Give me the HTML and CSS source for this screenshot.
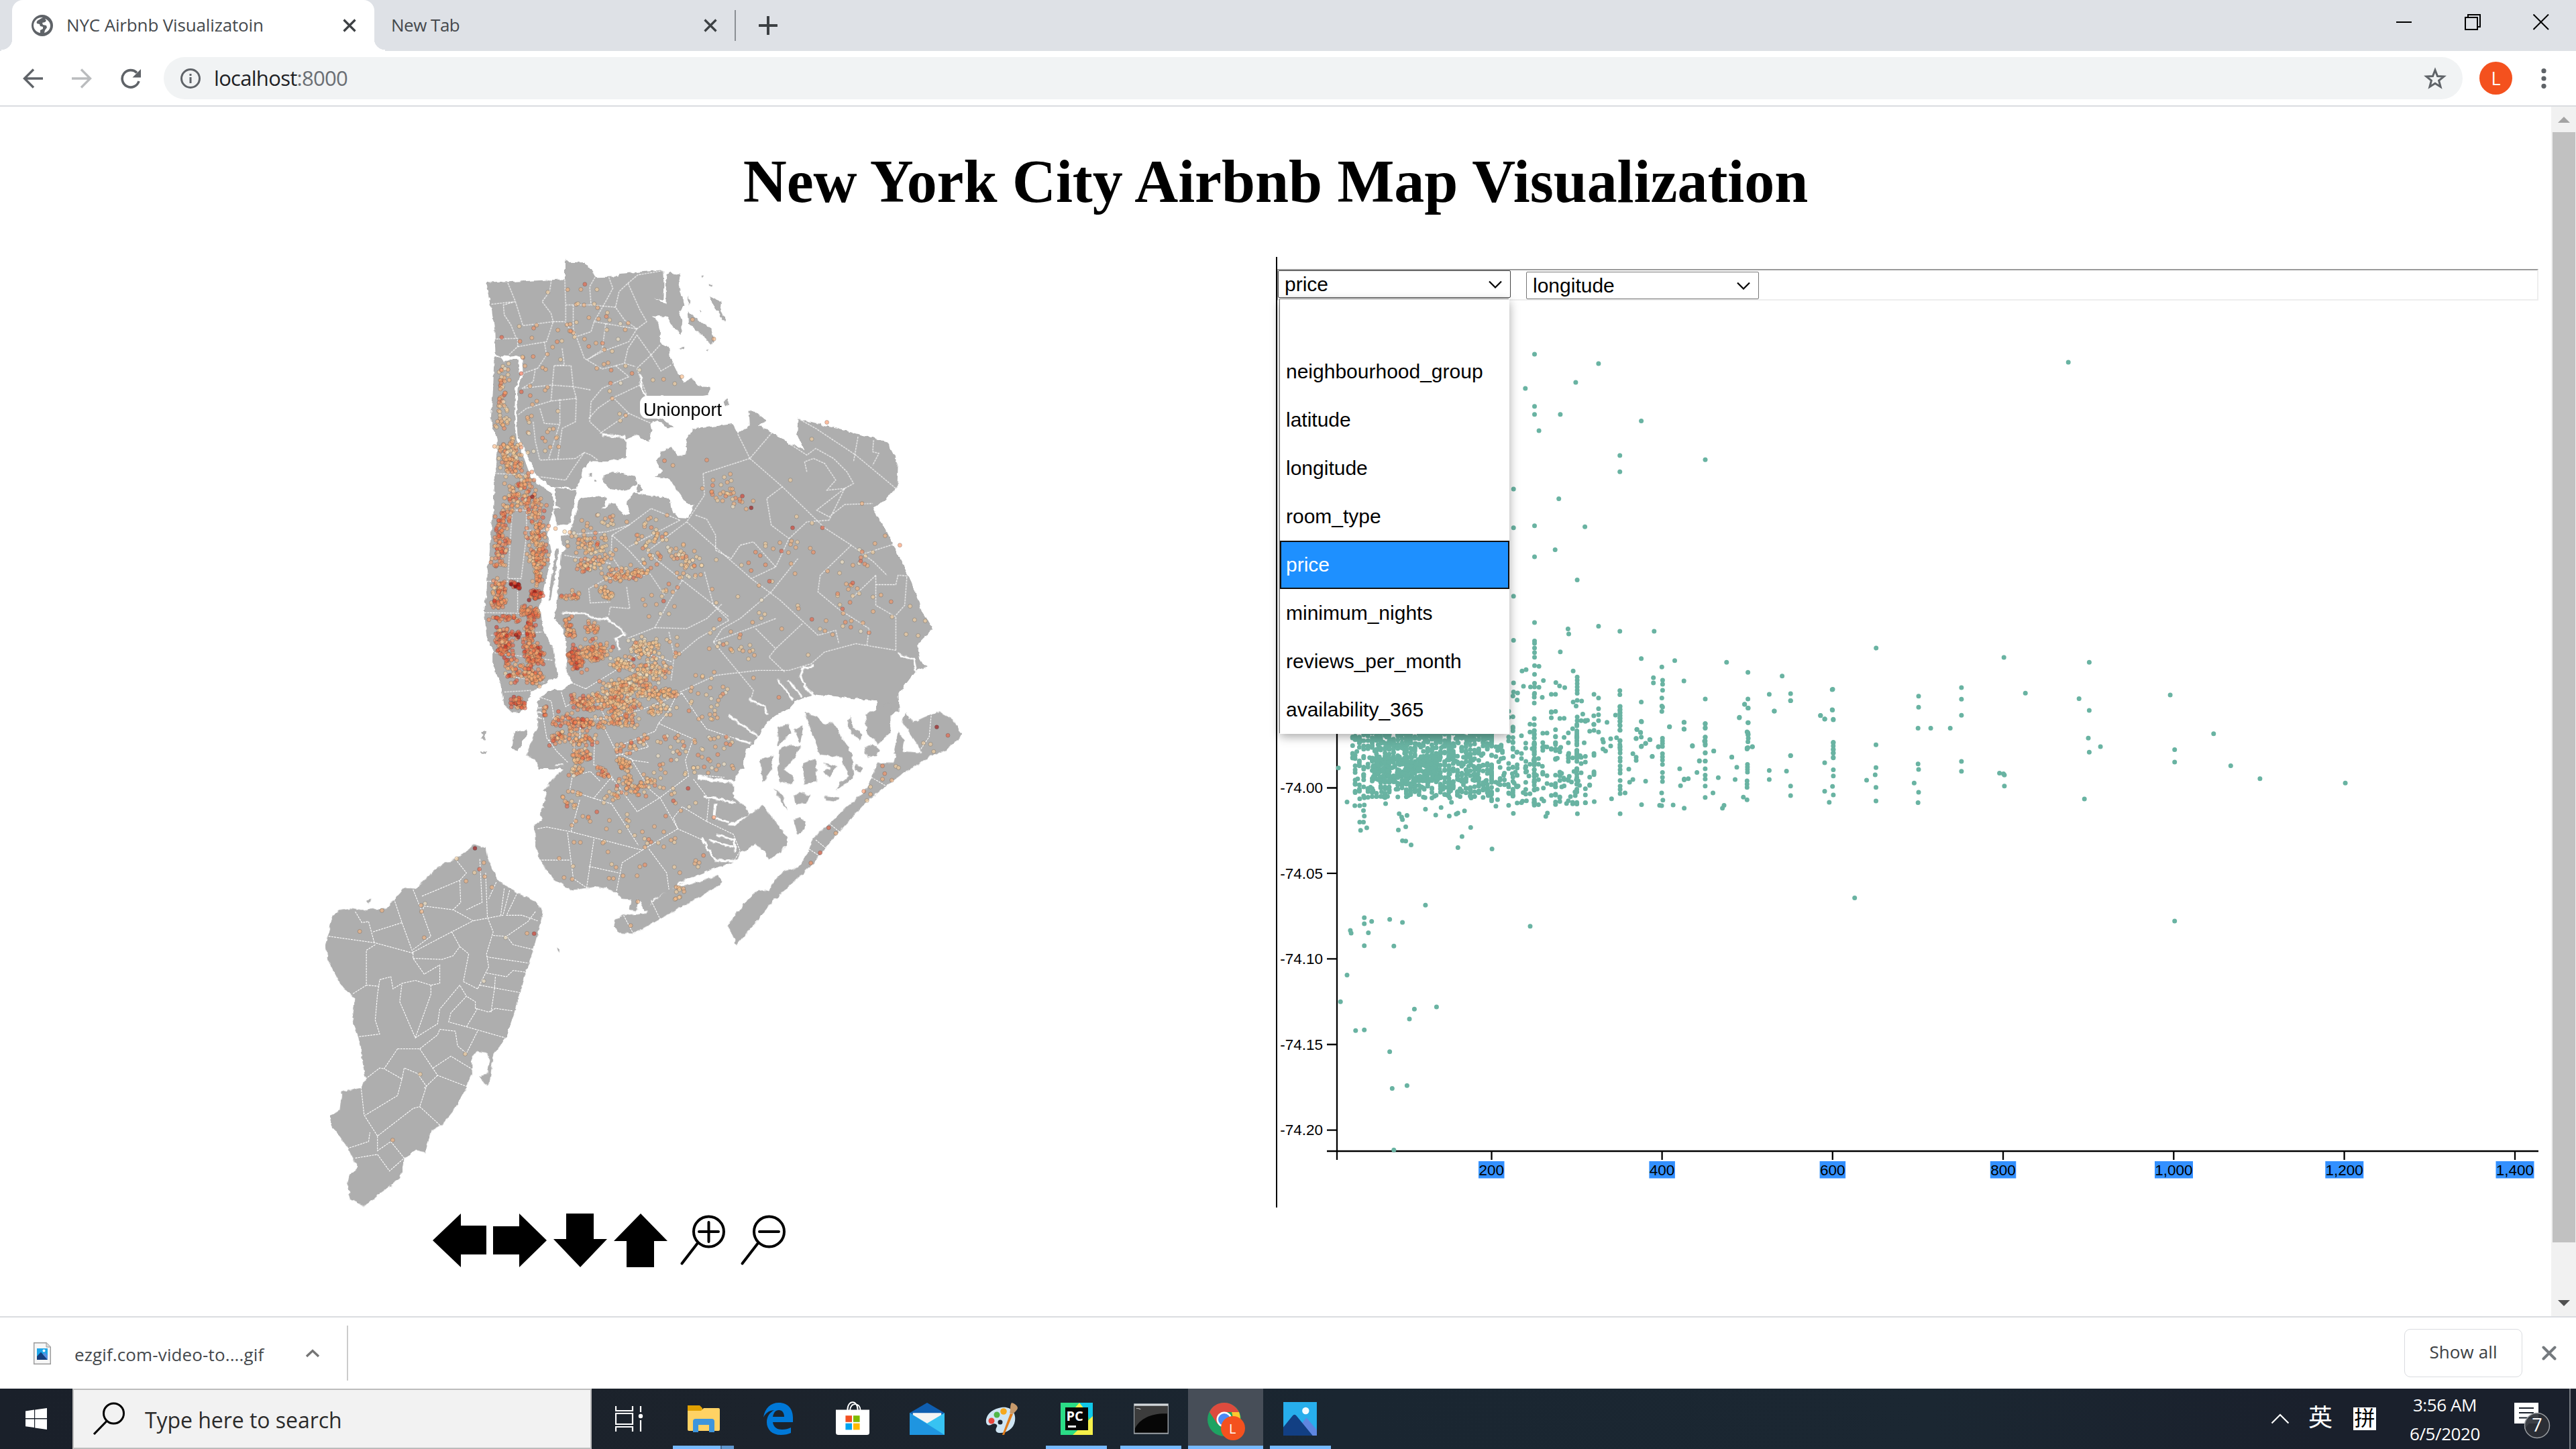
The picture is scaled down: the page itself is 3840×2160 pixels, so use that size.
FILE: index.html
```html
<!DOCTYPE html>
<html lang="en">
<head>
<meta charset="utf-8">
<title>NYC Airbnb Visualizatoin</title>
<link rel="stylesheet" href="styles.css">
</head>
<body>
<div class="screen">
  <header class="tabstrip">
    <div class="tab tab-active">
      <svg class="favicon" viewBox="0 0 32 32"><circle cx="16" cy="16" r="16" fill="#5f6368"/><path d="M17 4c-3 1-4 3-7 4-2 1-3 3-2 5l4 1 1 3 4 1v3l-4 2v4c-6-1-10-6-10-11C3 9 9 3 17 4zM20 6l2 3-2 2-4 1 1 3 5 1 1 3-3 4-1 4c6-2 9-6 9-11 0-4-3-8-8-10z" fill="#fff"/></svg>
      <span class="tab-title t-first">NYC Airbnb Visualizatoin</span>
      <svg class="tab-close" viewBox="0 0 20 20"><path d="M1.500 1.500l17 17M18.500 1.500l-17 17" stroke="#3c4043" stroke-width="3.200"/></svg>
    </div>
    <div class="tab">
      <span class="tab-title t-second">New Tab</span>
      <svg class="tab-close" viewBox="0 0 20 20"><path d="M1.500 1.500l17 17M18.500 1.500l-17 17" stroke="#3c4043" stroke-width="3.200"/></svg>
    </div>
    <i class="tab-sep"></i>
    <svg class="new-tab" viewBox="0 0 28 28"><path d="M14 1v26M1 14h26" stroke="#3c4043" stroke-width="4" stroke-linecap="round"/></svg>
    <div class="window-buttons">
      <svg viewBox="0 0 24 24"><path d="M0 12h23" stroke="#000" stroke-width="2"/></svg>
      <svg viewBox="0 0 24 24"><path d="M1 5h18v18H1zM5 5V1h18v18h-4" fill="none" stroke="#000" stroke-width="2"/></svg>
      <svg viewBox="0 0 24 24"><path d="M.5 .5l22.500 22.500M23 .5L.5 23" stroke="#000" stroke-width="2"/></svg>
    </div>
  </header>
  <nav class="toolbar">
    <svg class="tool" viewBox="0 0 30 30"><path d="M30 15H3M16 1.500L2.500 15L16 28.500" fill="none" stroke="#5f6368" stroke-width="3.400"/></svg>
    <svg class="tool" viewBox="0 0 30 30"><path d="M0 15h27M14 1.500L27.500 15L14 28.500" fill="none" stroke="#babcbe" stroke-width="3.400"/></svg>
    <svg class="tool" viewBox="0 0 30 30"><path d="M27 19A12.700 12.700 0 1 1 24 6.500" fill="none" stroke="#5f6368" stroke-width="3.600"/><path d="M30 1v12.500H17.500z" fill="#5f6368"/></svg>
    <div class="omnibox">
      <svg class="info" viewBox="0 0 30 30"><circle cx="15" cy="15" r="13.500" fill="none" stroke="#5f6368" stroke-width="3"/><path d="M15 13v9M15 8v3" stroke="#5f6368" stroke-width="3"/></svg>
      <span class="url">localhost<span class="port">:8000</span></span>
      <svg class="star" viewBox="0 0 34 34"><path d="M17 4.500l3.500 9 9.500.6-7.400 6 2.500 9.400L17 24.300l-8.100 5.200 2.500-9.400-7.400-6 9.500-.6z" fill="none" stroke="#5f6368" stroke-width="3"/></svg>
    </div>
    <span class="avatar">L</span>
    <svg class="menu" viewBox="0 0 8 30"><circle cx="4" cy="3.700" r="3.600"/><circle cx="4" cy="15" r="3.600"/><circle cx="4" cy="26.300" r="3.600"/></svg>
  </nav>

  <div class="viewport">
    <main class="page">
      <h1>New York City Airbnb Map Visualization</h1>
      <div class="columns">
        <section class="map-col">
          <svg class="map" viewBox="440 383 1040 1417">
            <defs><filter id="rough" x="0" y="0" width="1" height="1"><feTurbulence type="fractalNoise" baseFrequency="0.12" numOctaves="2" seed="4"/><feDisplacementMap in="SourceGraphic" scale="6" xChannelSelector="R" yChannelSelector="G"/></filter></defs>
            <g filter="url(#rough)">
            <g class="land" transform="translate(440 360) scale(.66327 .49745)">
              <path d="M430 124L606 113 606 60 608 50 612 62 650 63 665 85 674 107 728 105 728 97 828 85 830 130 828 175 808 170 825 180 833 190 834 100 845 90 852 100 865 97 862 130 870 170 875 190 863 215 870 240 868 278 845 250 835 225 803 222 815 240 820 270 820 300 840 320 843 350 858 390 875 425 890 408 905 432 933 438 928 460 905 465 790 465 785 520 815 530 830 535 850 558 838 560 815 535 798 545 802 570 795 600 775 590 768 580 745 592 743 650 715 655 700 660 665 658 648 680 640 715 632 742 600 735 578 738 560 720 542 700 530 660 515 620 502 590 498 520 500 440 512 400 510 350 500 342 455 342 450 335 448 260 440 190z"/>
              <path d="M447 348L460 345 470 360 485 352 500 352 505 400 495 440 493 520 498 595 512 640 528 700 545 725 578 755 582 790 575 830 565 860 570 900 575 930 570 980 560 1030 550 1090 555 1140 560 1170 578 1210 585 1260 590 1302 560 1325 530 1350 520 1385 505 1412 488 1412 470 1390 462 1330 445 1270 445 1220 430 1180 425 1110 430 1060 432 1000 437 930 445 800 450 680 455 600 440 530 445 440z"/>
              <path d="M585 738L632 745 618 845 585 852 582 800 597 797 585 790zM586 920h8L574 1075h-4zM693 700L715 692 765 705 768 728 740 747 705 742 692 720zM768 755l2-28h8v20zM660 695h7v8h-7zM672 712h5v7h-5z"/>
              <path d="M597 880L618 875 640 770 680 763 702 768 688 805 705 785 720 785 738 822 752 815 745 780 760 755 842 770 845 800 860 826 885 828 895 790 880 785 855 740 840 710 808 705 825 690 812 660 822 632 845 615 862 645 878 640 880 590 895 562 983 547 995 577 1022 550 1020 510 1030 506 1060 540 1040 550 1072 572 1110 605 1145 625 1128 580 1130 530 1330 600 1355 665 1353 740 1298 803 1330 870 1385 1020 1410 1110 1434 1160 1398 1210 1405 1260 1420 1275 1402 1282 1393 1290 1356 1355 1358 1405 1350 1410 1325 1440 1305 1430 1308 1378 1165 1355 1125 1378 1110 1400 1080 1420 1060 1440 1045 1475 1028 1508 1010 1525 1008 1580 545 1580 545 1375 570 1345 600 1345 625 1320 610 1290 610 1200 597 1150 583 1130 590 1050 597 935 610 920 598 905z"/>
              <path d="M933 165L958 180 955 205 968 237 960 235 940 190zM883 210L905 235 935 260 942 295 935 308 905 270 885 245zM862 320L875 317 872 325zM925 325l6-2-4 6zM911 104h6l-3 6zM930 128h6v5h-6zM884 165l5 15-6 10zM910 205l3 5-4 4zM963 480l7-6 4 14-8 6zM493 1470L520 1462 520 1480 500 1525 487 1520zM418 1470l12-3-4 24-8-3 5-9zM418 1526l12 2-2 8-10-4z"/>
            </g>
            <g class="land" transform="translate(440 1060) scale(.66327 .54847)">
              <path d="M545 -20L1065 -20 1030 90 1015 95 1005 150 985 190 905 174 905 187 985 197 985 235 1015 262 1020 282 970 308 990 310 1050 255 1105 340 1105 365 1068 402 1035 360 1005 385 985 410 950 425 890 455 845 485 800 515 795 540 785 542 770 510 768 542 750 540 755 512 735 510 720 490 680 477 620 487 580 455 550 405 540 365 538 310 555 295 550 280 565 220 558 215 590 170 603 155 555 150 520 118 530 85 545 40z"/>
              <path d="M716 580L720 565 738 555 790 548 800 520 830 495 840 485 890 470 950 447 960 465 930 490 820 565 760 605 725 602z"/>
              <path d="M973 585L1000 535 1035 490 1065 485 1090 440 1130 425 1150 390 1165 345 1200 305 1240 260 1280 220 1295 180 1310 140 1345 140 1352 110 1408 115 1400 95 1365 30 1370 5 1390 30 1443 0 1480 25 1498 65 1465 105 1430 122 1365 170 1285 245 1210 345 1160 420 1075 515 992 635z"/>
              <path d="M1282 10L1338 -25 1338 60 1310 90 1285 60zM1085 45L1110 36 1115 60 1085 95zM1120 50L1142 40 1135 90zM1145 5l27 10 15 20 20-5 25 45 20 45 3 60-40 36 8-20 22-20-10-20-7-30-48-8zM1045 130L1075 120 1070 160 1050 195zM1085 150L1090 100 1110 92 1137 98 1120 130 1098 160 1120 180 1118 200 1088 190zM1140 140L1170 130 1172 190 1145 200zM1120 230L1135 220 1157 228 1150 250 1125 253zM1190 230L1225 235 1215 248 1195 245zM1120 295L1135 288 1147 300 1145 320 1130 338zM1280 100L1300 90 1313 105 1305 122 1285 125zM1355 55L1370 80 1364 120 1345 115zM1187 140L1217 150 1200 180 1187 165 1203 155zM1240 40l8-28 5 30 20 20-2 20-22-25zM1258 145l18 10-4 14-12-8zM1075 210l20 20 12 40-18-32z"/>
              <path d="M404 363L428 372 432 400 455 460 490 487 545 522 557 548 535 650 515 720 490 830 472 890 445 935 437 1010 430 1016 413 992 432 985 438 950 430 928 412 925 396 940 398 985 385 1020 360 1080 330 1125 305 1140 293 1200 270 1192 245 1218 237 1270 190 1310 155 1348 125 1325 117 1290 122 1260 140 1240 120 1190 80 1125 80 1100 100 1085 105 1035 148 1022 158 1000 142 885 128 840 135 780 105 750 75 680 68 635 85 555 100 540 125 535 150 540 205 535 245 480 270 483 320 425 360 402zM588 643l6 3 2 12-5-4zM161 514l10-2-2 10-5 2z"/>
            </g>
            <g class="channel" transform="translate(440 360) scale(.66327 .49745)">
              <path d="M600 1113L650 1113 675 1132 700 1130 728 1155 742 1180M742 1175L720 1190 730 1225M1355 1235L1390 1252 1396 1290M1165 1271L1140 1280 1135 1300 1145 1335 1165 1360M1085 1312L1120 1375M1108 1315L1140 1365M975 1420L1040 1482M990 1490L1025 1505M1020 1370L1055 1395 1062 1420M690 580L740 585 745 600M775 400L778 440 790 470"/>
            </g>
            <g class="channel" transform="translate(440 1060) scale(.66327 .54847)">
              <path d="M903 182L985 192M918 232L950 238 990 250M945 250L942 290 975 302M915 345L925 370 945 405 1005 408M945 335L985 350 990 385M930 350L985 370M860 470L955 425"/>
              <path class="piers" d="M545 -10h9M545 5h9M545 20h9M562 175h16M560 190h16M556 205h16M552 220h13M550 240h12M548 260h12M580 160h16M585 145h18"/>
            </g>
            </g>
            <g class="border" transform="translate(440 360) scale(.66327 .49745)">
              <path d="M478 124L495 180 440 188M495 180L468 190 470 220 485 250 497 290M495 180L512 252 580 240M576 113L572 150 555 180 575 215 580 240 606 240M606 113L608 190 608 245 630 285M674 107L662 135 665 190M608 190L665 190 720 197M705 107L714 140 700 175 672 240 768 262 790 240 775 205 748 125 728 150 720 197 740 235 768 262M748 125L770 100 828 87M672 240L665 270 632 285M698 245L690 325 655 355M625 190L625 260 650 350 690 382M768 262L750 300 690 330 655 355M768 280L800 340 822 388 845 370M800 340L768 380 790 460M820 310L800 340M690 382L720 372 740 365 748 320 768 280M720 372L750 405M740 365L765 375M775 430L715 468 750 515 800 545M715 468L680 500 660 530M750 515L685 575M750 405L690 440 665 480 662 540 690 575 740 590M452 292L500 290 500 315 480 340M500 315L565 300 580 240M540 380L535 420 510 440 575 430 625 435 632 470 575 478 520 500 500 520M582 372L578 430 575 478M582 372L620 372 625 435 665 445M595 472L595 545 570 650M632 470L630 540 600 560 590 655M550 500L560 545 595 548M535 540L540 600 550 655 630 650 650 632 665 640 680 655M650 632L625 680 608 715 550 705M560 300L565 340 545 380M600 320L605 370 582 372M512 395L545 380"/>
              <path d="M455 615L510 617M448 695L530 700M490 805L520 805 520 880 508 1010 478 1010 488 805M430 1018L480 1018M425 1112L550 1115M440 1180L555 1170M448 1232L580 1255M470 1300L560 1320M470 1350L530 1345M520 865L565 865M500 1015L500 1110"/>
              <path d="M995 577L1022 650 1072 572M1022 650L917 695M1022 650L1095 735 1190 858 1250 910 1300 960 1330 1000M1110 605L1150 640 1170 620 1210 650 1240 690 1255 725 1235 740 1200 835M1130 530L1170 560 1260 640 1350 740M1265 585L1255 660M1300 595L1298 630 1312 635 1298 670M1150 690L1145 660 1165 650 1190 665 1215 715 1195 745 1235 740 1172 805 1200 825 1235 788 1298 785M1095 735L1060 770 1070 850 1110 890 1080 975M1110 890L1150 840 1200 835M917 695L920 760 880 840M900 820L925 832 945 880 945 925 980 950 1000 910 1030 900 1080 975 1025 1010M880 840L1025 1010 1090 1075 1175 1180 1215 1165 1222 1205M865 835L750 915M750 850L712 880 710 940 730 980M750 850L800 800 865 835M880 840L790 930 870 1015 975 1125M712 880L750 925 800 1000 830 1060M870 1015L840 1080 808 1157 745 1190M808 1157L880 1160 925 1130 960 1085M600 880L700 870 750 850M605 940L710 965M730 980L700 1010 660 1040 663 1083 708 1080M700 1010L795 998M745 1035L752 1100 708 1095 705 1120M840 1170L852 1240 845 1315M865 1350L945 1300 1040 1285 1110 1285 1160 1265 1190 1230 1260 1205 1350 1225M940 1200L1030 1345 1025 1370M1035 1160L1080 1220 1065 1245 1100 1290M1140 1145L1080 1220M1080 1130L940 1200M940 1200L960 1160 1000 1130 1070 1050 1130 950M1250 910L1180 1000 1175 1050 1220 1100 1290 1160 1285 1210M1350 905L1280 935M1305 1000L1305 1090 1350 1125 1350 1225M1305 1000L1250 1070M1305 1028L1350 1028 1355 1000 1375 1002 1370 1090 1350 1120M920 990L940 1090 975 1135 905 1190 860 1240"/>
            </g>
            <g class="border" transform="translate(720 840) scale(.33333)">
              <path d="M460 560L400 535 360 540M460 560L590 480 640 440 700 400 790 420 845 440M350 575L370 640 440 600M890 580L720 650 550 695 390 695 310 690M890 580L970 700 1000 740 1180 800M890 580L860 600 830 660 785 715 770 750 610 815M785 715L940 785 905 880 920 950 790 1048M270 690L285 780 330 840 380 890M290 790L430 790 440 700M500 770L495 900 530 910 575 950 580 975M545 740L595 840 670 880M595 860L740 820 715 780M660 870L745 1010 790 1048 690 1110 575 955 495 1050 388 1015 400 950 480 930 525 975M495 1050L575 1075 695 1260M260 600L305 615 320 700M500 600L550 695M410 800L405 860M740 890L670 880"/>
            </g>
            <g class="border" transform="translate(440 1060) scale(.66327 .54847)">
              <path d="M545 320L565 315 620 328 780 378 735 412 722 490M620 328L640 240M612 330L625 455 655 480 672 345M548 405L618 405M660 422L728 440M780 378L860 320 820 235M895 185L930 240 925 300 870 260 850 290 860 320 915 350M795 375L835 440 840 485M800 515L820 565M738 555L760 605M925 300L985 335 1000 380 985 410M905 174L965 180M1430 5L1425 70 1405 105M1295 180L1330 205M1200 305L1225 330M1170 350L1195 375M1155 375L1180 395"/>
              <path d="M75 612L180 630 265 658M135 545L150 575 165 572 178 630M222 510L240 575 175 600M265 485L285 545 305 612 265 648M240 575L265 658M285 503L370 460M285 545L290 530 355 540 400 570 352 600 265 655M360 402L385 440 370 460 372 520 355 540M415 402L420 520 385 540M428 440L432 560 445 600 430 660 435 695 410 755M452 465L435 510M470 482L462 555M482 487L467 555 400 570M500 492L475 555 510 555 545 570M540 545L523 572 475 612 490 635 535 648M445 610L475 612M352 600L370 640 390 660 378 735 410 755M430 668L525 685M430 712L475 722 490 705 520 710M415 745L505 765M450 722L448 755 440 820M405 808L435 818 450 808 490 815M410 808L385 858 345 845 350 820 385 775 405 790 405 810M385 858L472 888M265 672L330 675 355 665 370 640M265 658L265 672 290 715 325 690 325 740 305 745 270 732 240 740 220 755 215 722 190 730 185 770 180 840 190 878 142 885M180 635L160 650 160 745 190 748M130 768L160 745M305 745L305 770 270 888 235 790 240 740M270 888L320 850 325 810 370 745 385 775M230 918L280 918 320 880 325 865 360 870 365 910 385 930 410 870M230 918L200 972 240 1000 245 970 275 985 295 1020 280 1075 325 1125M280 918L320 990 385 1020M310 970L350 938 400 975M320 990L290 1025M158 1000L190 970 200 972M240 1000L230 1045 158 1098M148 1022L155 1098 185 1155 265 1080 280 1075M122 1187L165 1170 168 1145M185 1155L185 1195 215 1170 245 1215 212 1250 185 1205 135 1215"/>
            </g>
            <g class="listings" id="listings"></g>
            <rect x="954" y="590" width="124" height="34" rx="11" fill="#fff"/>
            <text class="hood" x="959" y="619.500">Unionport</text>
          </svg>
          <div class="controls">
            <svg viewBox="0 0 80 80"><path d="M0 40L42 0v18h38v43H42v19z"/></svg>
            <svg viewBox="0 0 80 80"><path d="M80 40L39 0v19H0v42h39v19z"/></svg>
            <svg viewBox="0 0 80 80"><path d="M19 0h41v38h20L40 80 0 38h19z"/></svg>
            <svg viewBox="0 0 80 80"><path d="M40 0L80 41H60v39H19V41H0z"/></svg>
            <svg viewBox="0 0 80 80"><g class="lens"><circle cx="51.500" cy="27" r="22.500"/><path d="M35 44L11.500 74.500M51.500 13v29M37 27h29"/></g></svg>
            <svg viewBox="0 0 80 80"><g class="lens"><circle cx="51.500" cy="27" r="22.500"/><path d="M35 44L11.500 74.500M37 27h29"/></g></svg>
          </div>
        </section>
        <section class="chart-col">
          <div class="filters">
            <div class="select select-open"><span>price</span><svg viewBox="0 0 20 12"><path d="M1 1.500l9 9 9-9" fill="none" stroke="#000" stroke-width="2.200"/></svg>
              <ul class="options">
                <li></li><li>neighbourhood_group</li><li>latitude</li><li>longitude</li><li>room_type</li><li class="chosen">price</li><li>minimum_nights</li><li>reviews_per_month</li><li>availability_365</li>
              </ul>
            </div>
            <div class="select"><span>longitude</span><svg viewBox="0 0 20 12"><path d="M1 1.500l9 9 9-9" fill="none" stroke="#000" stroke-width="2.200"/></svg></div>
          </div>
          <svg class="chart" viewBox="1904 448 1890 1352">
            <path class="axis" d="M1993 460V1729M1978 1716H3784M1978 1174.500h15M1978 1301.900h15M1978 1429.400h15M1978 1557h15M1978 1684.600h15M2223.500 1716v13M2477.600 1716v13M2731.800 1716v13M2986 1716v13M3240.300 1716v13M3494.600 1716v13M3749 1716v13"/>
            <g class="dots" id="dots"></g>
            <g class="ylabels"><text x="1972" y="1182">-74.00</text><text x="1972" y="1309.500">-74.05</text><text x="1972" y="1437">-74.10</text><text x="1972" y="1564.500">-74.15</text><text x="1972" y="1692">-74.20</text></g>
            <g fill="#3390ff"><path d="M2204 1731h38.500v25.500h-38.500zM2458.400 1731h38.500v25.500h-38.500zM2712.600 1731h38.500v25.500h-38.500zM2966.800 1731h38.500v25.500h-38.500zM3212 1731h57v25.500h-57zM3466.300 1731h57v25.500h-57zM3720.500 1731h57v25.500h-57z"/></g>
            <g class="xlabels"><text x="2223.300" y="1751.500">200</text><text x="2477.600" y="1751.500">400</text><text x="2731.800" y="1751.500">600</text><text x="2986" y="1751.500">800</text><text x="3240.300" y="1751.500">1,000</text><text x="3494.600" y="1751.500">1,200</text><text x="3748.900" y="1751.500">1,400</text></g>
          </svg>
        </section>
      </div>
    </main>
    <aside class="scrollbar">
      <svg viewBox="0 0 37 38"><path d="M10 24l9-9 9 9z" fill="#a3a3a3"/></svg>
      <i class="thumb"></i>
      <svg viewBox="0 0 37 38"><path d="M10 14h18l-9 9z" fill="#505050"/></svg>
    </aside>
  </div>

  <div class="shelf">
    <svg class="file" viewBox="0 0 26 33"><path d="M.7.7H19l6.300 6.300v25.300H.7z" fill="#f7f7f7" stroke="#9a9a9a" stroke-width="1.400"/><path d="M19 .7V7h6.300" fill="#ddd" stroke="#9a9a9a"/><path d="M5 9h16v17H5z" fill="#1fa6e8"/><path d="M5 21l6-6.500L21 26H5z" fill="#173f7c"/><path d="M14 18l3-3 4 5v6z" fill="#5b8fe0"/><circle cx="15.500" cy="12.500" r="2" fill="#fff"/></svg>
    <span class="filename">ezgif.com-video-to....gif</span>
    <svg class="shelf-chev" viewBox="0 0 22 13"><path d="M2 11l9-8.500L20 11" fill="none" stroke="#757575" stroke-width="3.400"/></svg>
    <i class="shelf-sep"></i>
    <span class="show-all">Show all</span>
    <svg class="shelf-close" viewBox="0 0 22 22"><path d="M2.500 2.500l17 17M19.500 2.500l-17 17" stroke="#757a7e" stroke-width="4" stroke-linecap="round"/></svg>
  </div>

  <footer class="taskbar">
    <div class="start"><svg viewBox="0 0 32 32"><path d="M0 4.500L13 2.600V15H0zM14.200 2.400L32 0v15H14.200zM0 16.500h13v12.600L0 27.300zM14.200 16.500H32V32l-17.800-2.500z" fill="#fff"/></svg></div>
    <div class="search"><svg viewBox="0 0 50 50"><circle cx="31.500" cy="17" r="15" fill="none" stroke="#000" stroke-width="3"/><path d="M21 28.500L2 48" stroke="#000" stroke-width="3.200"/></svg><span>Type here to search</span></div>
    <div class="app taskview"><svg viewBox="0 0 42 40"><path d="M1 1v7h25V1M1 12h25v16H1zM1 39v-7h25v7M38 1v9M38 22v17" fill="none" stroke="#fff" stroke-width="2.200"/><circle cx="38" cy="16" r="3.200" fill="#fff"/></svg></div>
    <div class="app run multi"><svg viewBox="0 0 52 52"><path d="M2 6h18l4 4v6H2z" fill="#e0a000"/><path d="M2 14h20l4-4h22q2 0 2 2v30q0 2-2 2H4q-2 0-2-2z" fill="#ffd264"/><path d="M10 46V30q0-4 4-4h24q4 0 4 4v16h-8V35H18v11z" fill="#3e95dc"/></svg></div>
    <div class="app"><svg viewBox="0 0 52 52"><path d="M4 24C6 10 15 2 27 2c14 0 21 10 21 22v7H18c1 8 7 11 14 11 5 0 9-1 13-3v8c-4 2-9 3-15 3C17 50 9 42 9 31c0-8 4-14 11-18C11 14 7 18 4 24zm14-1h17c0-6-3-10-8-10s-8 4-9 10z" fill="#0078d7"/></svg></div>
    <div class="app"><svg viewBox="0 0 52 54"><path d="M18 14C18-3 34-3 34 14M22 14c0-13 16-13 16 0" fill="none" stroke="#fff" stroke-width="2"/><path d="M0 13h52v35q0 4-4 4H4q-4 0-4-4z" fill="#fff"/><path d="M15 22h10v10H15z" fill="#f25022"/><path d="M27 22h10v10H27z" fill="#7fba00"/><path d="M15 34h10v10H15z" fill="#00a4ef"/><path d="M27 34h10v10H27z" fill="#ffb900"/></svg></div>
    <div class="app"><svg viewBox="0 0 54 52"><path d="M0 17L27 1l27 16v17H0z" fill="#0f5eb0"/><path d="M5 17h44v18H5z" fill="#f4f4f4"/><path d="M0 17l27 16 27-16v34H0z" fill="#37c3f2"/><path d="M0 17v34h54z" fill="#1f95e0"/></svg></div>
    <div class="app"><svg viewBox="0 0 52 52"><path d="M26 9c14-2 22 8 20 20-2 13-14 19-24 18-6-1-5-6-3-9s-3-6-7-4c-6 4-10 0-9-7C5 17 14 11 26 9z" fill="#cfe5f3"/><circle cx="24" cy="31" r="3.500" fill="#1b222c"/><circle cx="11" cy="29" r="4.500" fill="#e8463c"/><circle cx="19" cy="20" r="4.500" fill="#51b748"/><circle cx="29" cy="15" r="4.800" fill="#f6a81c"/><path d="M27 50L39 18l4 1-13 31z" fill="#e07c1a"/><path d="M38 17c2-4 0-11 3-15 4 1 9 4 9 8-1 4-5 6-7 9z" fill="#c79a6b"/></svg></div>
    <div class="app run"><svg viewBox="0 0 52 52"><path d="M2 2h48v48H2z" fill="#2bdc86"/><path d="M28 2h22v30z" fill="#10c8e8"/><path d="M30 2l8 10-20 4zM50 22v28H20z" fill="#f5f04a"/><path d="M9 9h34v34H9z" fill="#050505"/><text x="10.500" y="28.500" class="pc">PC</text><path d="M13 36h12v3H13z" fill="#fff"/></svg></div>
    <div class="app run"><svg viewBox="0 0 54 46"><path d="M.5.5h53v45H.5z" fill="#060606" stroke="#9aa0a5" stroke-width="2"/><path d="M2 3h50v12C28 14 10 22 2 38z" fill="#3c3c3c"/><path d="M1 0h52v3H1z" fill="#d5d9dc"/><path d="M4 7h5M8 8h3" stroke="#bbb"/></svg></div>
    <div class="app run current"><svg viewBox="0 0 58 58"><circle cx="27" cy="27" r="25" fill="#1ea362"/><path d="M5 16C9 7 17 2 27 2c10 0 18 6 22 14H27L17 34z" fill="#dd4b3e"/><path d="M49 16c5 13 0 31-20 36l12-24-3-12z" fill="#fdc82f"/><circle cx="27" cy="27" r="11.500" fill="#fff"/><circle cx="27" cy="27" r="9" fill="#4a8af4"/><circle cx="40" cy="40" r="18" fill="#f4511e"/><text x="34" y="48" class="badge-l">L</text></svg></div>
    <div class="app run"><svg viewBox="0 0 50 50"><path d="M1 1h48v48H1z" fill="#27aeec"/><path d="M25 35l9-12 15 18v8H25z" fill="#5f86e0"/><path d="M1 37l13-16q3-4 6 0l23 28H1z" fill="#123f83"/><circle cx="33" cy="13.500" r="5" fill="#f3fbff"/></svg></div>
    <div class="tray">
      <svg class="tray-up" viewBox="0 0 28 16"><path d="M1.500 14.500L14 2l12.500 12.500" fill="none" stroke="#fff" stroke-width="2.200"/></svg>
      <span class="ime">英</span>
      <span class="ime-box">拼</span>
      <div class="clock"><span class="time">3:56 AM</span><span class="date">6/5/2020</span></div>
      <svg class="notes" viewBox="0 0 54 54"><path d="M0 0h36v31H22l-7 8v-8H0z" fill="#fff"/><path d="M7 8h22M7 15h22M7 22.500h22" stroke="#1b222c" stroke-width="2"/><circle cx="34" cy="34" r="18.500" fill="#2c3036" fill-opacity=".92" stroke="#9a9da1" stroke-width="1.500"/><text x="34" y="43" class="count">7</text></svg>
      <i class="desk-edge"></i>
    </div>
  </footer>
</div>
<script src="app.js"></script>
</body>
</html>
```
FILE: styles.css
```css
* { box-sizing: border-box; }
html, body { margin: 0; padding: 0; }
body { background: #fff; font-family: "Open Sans", "Noto Sans", sans-serif; overflow: hidden; }
svg { display: block; flex: none; }
.screen { width: 3840px; height: 2160px; display: flex; flex-direction: column; }

.tabstrip { height: 76px; background: #dee1e6; display: flex; align-items: center; padding-left: 18px; flex: none; }
.tab { position: relative; height: 76px; width: 540px; display: flex; align-items: center; padding: 0 27px 0 25px; font-size: 26px; color: #45494d; }
.tab-active { background: #fff; border-radius: 16px 16px 0 0; padding-left: 29px; }
.tab-active::before, .tab-active::after { content: ""; position: absolute; bottom: 0; width: 16px; height: 18px; }
.tab-active::before { left: -16px; background: radial-gradient(circle at 0 0, transparent 16px, #fff 16.5px); }
.tab-active::after { right: -16px; background: radial-gradient(circle at 100% 0, transparent 16px, #fff 16.5px); }
.favicon { width: 32px; height: 32px; margin-right: 20px; }
.tab-title { flex: 1; white-space: nowrap; line-height: 36px; margin-top: -2px; }
.t-first { letter-spacing: 0; letter-spacing: -.15px; }
.t-second { letter-spacing: -.5px; }
.tab-close { width: 20px; height: 20px; }
.tab:nth-child(2) { width: 537px; padding-right: 26px; }
.tab-sep { width: 2px; height: 46px; background: #8b8f94; }
.new-tab { width: 28px; height: 28px; margin-left: 34px; }
.window-buttons { margin-left: auto; display: flex; gap: 78px; padding-right: 40px; margin-top: -10px; }
.window-buttons svg { width: 24px; height: 24px; }

.toolbar { height: 83px; border-bottom: 2px solid #dadce0; display: flex; align-items: center; padding-left: 34px; flex: none; }
.tool { width: 30px; height: 30px; margin-right: 43px; }
.tool:nth-child(3) { margin-right: 34px; }
.omnibox { width: 3427px; height: 63px; border-radius: 32px; background: #f1f3f4; display: flex; align-items: center; padding: 0 24px 0 25px; }
.info { width: 30px; height: 30px; margin-right: 20px; }
.url { font-size: 31px; line-height: 60px; letter-spacing: -.7px; color: #202124; flex: 1; margin-top: -1px; }
.port { color: #6b6f74; }
.star { width: 34px; height: 34px; }
.avatar { width: 49px; height: 49px; border-radius: 50%; background: #f4511e; color: #fff; font-size: 27px; line-height: 49px; text-align: center; margin-left: 25px; }
.menu { width: 8px; height: 30px; margin-left: 43px; fill: #5f6368; }

.viewport { height: 1803px; display: flex; flex: none; }
.page { width: 3803px; padding-top: 60px; }
h1 { margin: 0 0 60px; text-align: center; font: bold 90px/104px "Liberation Serif", serif; letter-spacing: -.05px; color: #000; }
.columns { display: flex; }
.map-col { width: 1902px; }
.map { width: 1040px; height: 1417px; margin-left: 440px; }
.land path { fill: #aeaeae; }
.channel path { fill: none; stroke: #fff; stroke-width: 3; vector-effect: non-scaling-stroke; }
.channel .piers { stroke-width: 2; }
.border path { fill: none; stroke: #fff; stroke-width: 1.1; stroke-dasharray: 3 1.2; vector-effect: non-scaling-stroke; }
.listings circle { fill-opacity: .58; stroke: #444; stroke-width: .6; stroke-opacity: .5; }
.hood { font: 27px "Liberation Sans", sans-serif; }
.controls { display: flex; gap: 10px; padding: 9px 0 0 645px; }
.controls svg { width: 80px; height: 80px; fill: #000; }
.lens { fill: none; stroke: #000; stroke-width: 4; stroke-linecap: round; }

.chart-col { width: 1890px; height: 1417px; border-left: 2px solid #000; padding-top: 18px; }
.filters { width: 1880px; height: 47px; display: flex; gap: 23px; border: 2px solid #eee; border-top-color: #9a9a9a; border-left: 1px solid #9a9a9a; font: 30px/38px "Liberation Sans", sans-serif; }
.select { position: relative; width: 347px; height: 41px; margin-top: 2px; border: 1px solid #767676; border-radius: 2px; background: #fff; display: flex; align-items: center; justify-content: space-between; padding: 0 12px 0 9px; }
.select-open { margin-top: 0; border-color: #444; }
.select svg { width: 20px; height: 12px; }
.options { position: absolute; left: 2px; top: 42px; width: 342px; margin: 0; padding: 0; list-style: none; background: #fff; box-shadow: 0 4px 14px rgba(0,0,0,.35), -1px -1px 0 #777; z-index: 2; }
.options li { height: 72px; padding-left: 9px; line-height: 72px; }
.options .chosen { background: #1e90ff; color: #fff; border: 2px solid #101010; padding-left: 7px; line-height: 68px; }
.chart { width: 1890px; height: 1352px; }
.axis { fill: none; stroke: #000; stroke-width: 2.3; }
.dots { fill: #69b3a2; }
.ylabels, .xlabels { font: 22.5px "Liberation Sans", sans-serif; }
.ylabels { text-anchor: end; }
.xlabels { text-anchor: middle; }

.scrollbar { width: 37px; background: #f1f1f1; display: flex; flex-direction: column; }
.scrollbar svg { width: 37px; height: 38px; }
.thumb { width: 34px; height: 1655px; margin-left: 2px; background: #c1c1c1; }
.scrollbar svg:last-child { margin-top: auto; margin-bottom: 0; }

.shelf { height: 108px; border-top: 2px solid #dadce0; display: flex; align-items: center; padding-left: 50px; flex: none; }
.file { width: 26px; height: 33px; margin-right: 35px; }
.filename { width: 344px; font-size: 26px; letter-spacing: .12px; color: #45494d; line-height: 36px; margin-top: 4px; }
.shelf-chev { width: 22px; height: 13px; }
.shelf-sep { width: 2px; height: 82px; background: #ccc; margin-left: 40px; }
.show-all { margin-left: auto; width: 176px; height: 72px; border: 1px solid #dadce0; border-radius: 9px; text-align: center; font-size: 26px; line-height: 67px; letter-spacing: .1px; color: #3c4043; font-weight: 500; }
.shelf-close { width: 22px; height: 22px; margin: 0 29px; }

.taskbar { height: 90px; background: linear-gradient(90deg, #1a202a, #1c232c 30%, #1a2631 52%, #1b2732 75%, #1a202c 90%); display: flex; flex: none; }
.start { width: 108px; display: flex; align-items: center; padding-left: 38px; }
.start svg { width: 32px; height: 32px; }
.search { width: 774px; background: #f2f2f2; border: 2px solid #bcbcbc; display: flex; align-items: center; padding-left: 28px; gap: 28px; font-size: 32px; letter-spacing: -.05px; color: #2b2b2b; }
.search svg { width: 50px; height: 50px; }
.search span { line-height: 44px; margin-top: 3px; }
.app { position: relative; width: 111.2px; display: flex; align-items: center; justify-content: center; }
.app svg { width: 52px; height: 52px; }
.taskview { width: 111px; }
.taskview svg { width: 42px; height: 40px; }
.run::after { content: ""; position: absolute; left: 10px; bottom: 0; width: 91px; height: 5px; background: #76b9ff; }
.multi::after { background: linear-gradient(90deg, #76b9ff 71px, #456a8f 71px, #456a8f 73px, #5f97cf 73px); }
.current { background: #474e58; }
.current::after { left: 0; width: 100%; }
.current svg { width: 58px; height: 58px; margin-top: 6px; }
.pc { font: bold 20px "Open Sans", sans-serif; fill: #fff; }
.badge-l { font: 20px "Open Sans", sans-serif; fill: #fff; }
.tray { margin-left: auto; display: flex; align-items: center; color: #fff; font-family: "Open Sans", "Noto Sans CJK SC", sans-serif; }
.tray-up { width: 28px; height: 16px; margin-right: 28px; }
.ime { font-size: 36px; line-height: 50px; margin-top: -4px; width: 36px; margin-right: 31px; }
.ime-box { width: 34px; height: 34px; background: #fff; color: #000; font-size: 31px; line-height: 31px; text-align: center; margin-right: 41px; }
.clock { width: 123px; display: flex; flex-direction: column; text-align: center; font-size: 26px; line-height: 43px; white-space: nowrap; margin-top: 2px; }
.time, .date { letter-spacing: -.4px; }
.notes { width: 54px; height: 54px; margin-left: 42px; margin-top: 6px; overflow: visible; }
.count { font: 27px "Open Sans", sans-serif; fill: #fff; text-anchor: middle; }
.desk-edge { width: 2px; height: 90px; background: #767b82; margin: 0 8px 0 28px; }
```
FILE: app.js
```js
var NS = 'http://www.w3.org/2000/svg';
var seed = 20200605;
function rnd() {
  seed = (seed + 0x6D2B79F5) | 0;
  var t = Math.imul(seed ^ (seed >>> 15), 1 | seed);
  t = (t + Math.imul(t ^ (t >>> 7), 61 | t)) ^ t;
  return ((t ^ (t >>> 14)) >>> 0) / 4294967296;
}
function gauss() { return (rnd() + rnd() + rnd() + rnd() - 2) * 1.5; }
function circle(parent, x, y, r, fill) {
  var c = document.createElementNS(NS, 'circle');
  c.setAttribute('cx', x.toFixed(1));
  c.setAttribute('cy', y.toFixed(1));
  c.setAttribute('r', r);
  if (fill) c.setAttribute('fill', fill);
  parent.appendChild(c);
}

/* Scatter plot: each block has an origin, a scale and "x,y y y" columns. */
var dots = document.getElementById('dots');
function plot(ox, oy, sx, sy, text) {
  text.split(';').forEach(function (col) {
    var p = col.trim().split(',');
    p[1].split(' ').forEach(function (y) { circle(dots, ox + p[0] / sx, oy + y / sy, 3.5); });
  });
}
plot(1880, 360, 1.8233, 2.0103, '743,338 494 518 852 945 1142 1197 1204 1218 1232 1246 1271 1297 1324 1335 1354;917,366 1153 1368 1400 1418 1436 1470;855,422;718,440;813,518 1230;755,567 1273 1336;1033,538 1250 1380 1438 1485 1514;975,641 690 1168 1346 1358 1394 1405 1415 1427 1438 1449 1464 1496 1508 1517;1207,654 1371 1445 1457 1485 1506 1532 1557;686,742 858 1063 1195 1323 1350;809,771;880,855;799,924;859,1014 1305 1315 1325 1335 1345 1354 1375 1425 1436;834,1161;836,1176;1068,1168;709,1287;720,1283;848,1287 1380;1124,1256;1265,1261;1089,1275 1368 1392 1408;1323,1291 1371 1398 1442 1472 1478 1499 1517;1416,1302;1066,1307 1323;1091,1315 1327 1345 1395;1149,1317 1441 1461;767,1316;801,1322;811,1332;825,1337;713,1333;732,1335;764,1366;697,1353;1381,1357;1439,1355 1376 1541;1552,1343 1403;1555,1432 1502 1512 1522 1533 1546;1520,1420;1532,1431;1314,1387;1395,1407;1300,1426;963,1419;940,1441;904,1421 1447;887,1435;874,1416;871,1377;856,1392;1110,1454;1205,1497;1335,1514;1172,1511;1230,1527;1279,1545;1021,1462;1031,1471;1019,1489;1057,1493;1045,1504;1080,1514;1063,1543;966,1487;950,1490 1512;928,1492;930,1500;936,1527;929,1521;878,1502;1191,1556');
plot(1880, 1040, 1.6333, 2.0632, '1249,41;1289,9 178 272 301;1362,55;1372,66 200 288;1391,38 273;1393,68 137 160 170 185 222 241 299;1164,62;1177,20;1186,32 77 113 125;1183,105 155 158;1196,151;1102,164;1146,183;1158,214;1154,252;1113,246;1100,293;1123,340;1127,331;1174,306;1183,314 256 266 276;1184,205 213 221 229;1237,224 252;1279,226;1383,322;1497,145 215 276 318;1495,237;1474,254;994,90;1030,76 97 250 253 340;1050,149;1067,195;1061,230;1019,219;1021,271;1040,249;1003,330;977,125 133 141 150 172 182 192 205 230 245 258;967,151;975,293 332;978,315;970,331;1081,80 94 122 133 146 170 195 219 238 250 272 307;926,74 149 329;915,98;924,107;936,141 257;946,129;913,126 183 193;905,172 252;952,181;895,220;897,260;886,293;853,311;874,27 36 46 55 64 72 86 100 132 150 160 170 185 195 210 222 232 255 272 282 295 357;770,357;811,320;693,365;697,355;614,356;562,465;479,461 355;489,427;510,399;400,343 638;425,361;458,364;475,358;495,348;438,338;336,357;342,367;344,375 440 691;355,362 1193;352,397 441;334,407;365,453;209,321 853;228,332;240,311 332 383;251,308 330 364 677 695 763 1022;249,347 383;257,400;242,408;303,326;188,216;269,688;313,682 1089;217,716;219,724;261,723;323,764 1391;655,703;1445,616;193,935;427,951;373,958;361,988;230,1024;319,1202');
plot(2700, 360, 1.3754, 1.0889, '527,196;44,727;133,660;395,675;439,733;549,742;570,683 761 829;568,806;593,820;736,736;745,825 845 1103;825,799;860,851;920,872;1095,879;560,905;220,738 756 857 894;219,790 848 911;245,790;285,790;308,724 743 769 844 860;211,879;386,863;394,864;396,866 884');

var priceX = function (p) { return 2223.5 + (p - 200) * 1.2713; };
for (var p = 40; p <= 200; p += 5) {
  var n = p < 60 ? 15 : (p % 50 === 0 ? 46 : (p % 25 === 0 ? 36 : 24));
  for (var i = 0; i < n; i++) circle(dots, priceX(p + (p === 200 || rnd() < 0.8 ? 0 : Math.round(rnd() * 4))), 1092 + Math.pow(rnd(), 1.25) * (p === 150 || p === 200 ? 106 : 98), 3.5);
}
for (i = 0; i < 190; i++) circle(dots, priceX(60 + rnd() * 80), 1128 + rnd() * 36, 3.5);
for (i = 0; i < 8; i++) circle(dots, priceX(37), 1094 + rnd() * 40, 3.5);
for (p = 205; p <= 320; p += 5) {
  n = p === 250 ? 52 : (p === 300 ? 36 : (p % 25 === 0 ? 20 : (p % 10 === 0 ? 8 : 4)));
  for (i = 0; i < n; i++) circle(dots, priceX(p), Math.max(1035, Math.min(1194 + rnd() * 8, 1128 + gauss() * 48)), 3.5);
}
for (i = 0; i < 60; i++) circle(dots, priceX(204 + rnd() * 100), 1110 + rnd() * 88, 3.5);

/* Map listings. */
var listings = document.getElementById('listings');
var palette = ['#fdeccb', '#fdd49e', '#fdb57a', '#fc8d59', '#ef5b3a', '#d7301f', '#990000'];
function listing(x, y, heat) {
  var k = Math.max(0, Math.min(6, Math.round(heat + gauss() * 0.9)));
  circle(listings, x, y, 3, palette[k]);
}
/* Each row: from x, from y, to x, to y, spread x, spread y, count, heat. */
function clusters(ox, oy, sx, sy, rows) {
  rows.forEach(function (c) {
    for (var i = 0; i < c[6]; i++) {
      var t = rnd();
      listing(ox + (c[0] + (c[2] - c[0]) * t + gauss() * c[4]) / sx, oy + (c[1] + (c[3] - c[1]) * t + gauss() * c[5]) / sy, c[7]);
    }
  });
}
clusters(440, 360, 1.5077, 2.0103, [
  [470, 375, 465, 560, 9, 8, 54, 1.8], [480, 595, 488, 690, 17, 10, 105, 1.9], [515, 705, 488, 800, 16, 14, 105, 2.4],
  [468, 810, 458, 975, 10, 8, 95, 3], [540, 765, 546, 965, 13, 8, 165, 2.5], [635, 880, 690, 960, 24, 26, 95, 1.7],
  [690, 820, 730, 860, 20, 14, 12, 1.5], [800, 815, 805, 950, 20, 10, 48, 1.7], [720, 990, 800, 975, 20, 10, 20, 2],
  [850, 930, 910, 960, 20, 20, 34, 1.5], [930, 740, 1020, 790, 18, 24, 32, 1.9]
]);
clusters(720, 840, 3, 3, [
  [75, 80, 75, 190, 20, 10, 85, 2.9], [125, 88, 165, 105, 8, 6, 18, 5], [245, 0, 240, 90, 12, 8, 45, 2.5], [220, 140, 250, 145, 12, 12, 48, 3.9],
  [175, 210, 245, 225, 12, 14, 75, 3.2], [50, 245, 150, 250, 20, 10, 28, 3], [212, 250, 205, 350, 13, 8, 72, 3], [80, 290, 105, 400, 18, 12, 120, 3.2],
  [150, 300, 155, 330, 10, 12, 10, 4.5], [120, 420, 135, 530, 17, 10, 40, 3.3], [215, 370, 240, 440, 24, 12, 160, 3], [185, 480, 250, 520, 18, 18, 105, 2.8],
  [135, 620, 180, 625, 13, 14, 55, 3.5], [375, 240, 395, 330, 12, 8, 32, 2.8], [465, 280, 515, 305, 12, 14, 24, 2.2], [405, 390, 425, 460, 18, 14, 105, 3.3],
  [460, 400, 550, 390, 22, 24, 100, 2.4], [590, 440, 650, 460, 20, 16, 50, 1.6], [660, 385, 780, 380, 20, 26, 78, 1.3], [680, 500, 820, 470, 22, 28, 95, 1.5],
  [560, 560, 700, 540, 25, 20, 150, 1.7], [700, 575, 850, 580, 20, 16, 90, 1.9], [490, 610, 680, 630, 22, 24, 150, 2], [400, 600, 490, 640, 22, 18, 62, 2.5],
  [340, 710, 530, 715, 18, 18, 95, 2.8], [570, 690, 690, 710, 20, 20, 62, 2.1], [300, 790, 370, 770, 16, 14, 30, 2.6], [400, 780, 490, 790, 14, 18, 42, 2.3],
  [400, 865, 480, 865, 14, 18, 46, 2.3], [390, 930, 450, 920, 14, 14, 18, 2.2], [515, 920, 560, 955, 10, 12, 16, 2.6], [600, 835, 730, 790, 14, 14, 32, 2.2],
  [625, 870, 640, 915, 14, 10, 44, 2], [620, 960, 700, 1010, 26, 20, 34, 1.8], [710, 970, 790, 990, 18, 18, 18, 1.7], [540, 1040, 720, 1020, 20, 18, 26, 2],
  [740, 660, 830, 650, 18, 26, 32, 1.3], [350, 150, 430, 140, 6, 10, 20, 2], [530, 90, 570, 160, 16, 12, 30, 1.5], [550, 70, 720, 40, 14, 10, 50, 2.1],
  [430, 10, 480, 10, 10, 14, 22, 2.1], [285, 640, 270, 690, 5, 4, 10, 2.4]
]);
/* x, y, width, height, count: sparse areas in map units. */
function scatter(ox, oy, sx, sy, rows) {
  rows.forEach(function (b) {
    for (var i = 0; i < b[4]; i++) listing(ox + (b[0] + rnd() * b[2]) / sx, oy + (b[1] + rnd() * b[3]) / sy, 1.8);
  });
}
scatter(440, 360, 1.5077, 2.0103, [
  [600, 140, 110, 200, 22], [500, 250, 80, 330, 20], [515, 430, 80, 240, 20], [580, 240, 200, 160, 18], [660, 380, 120, 180, 9], [1000, 900, 180, 280, 22],
  [930, 990, 120, 240, 16], [1170, 960, 180, 220, 32], [1260, 870, 60, 120, 7], [760, 1000, 150, 130, 9], [1080, 820, 140, 120, 8]
]);
scatter(720, 840, 3, 3, [
  [750, 760, 170, 190, 26], [940, 770, 180, 170, 32], [350, 1010, 100, 90, 16], [290, 1120, 540, 140, 26], [900, 480, 200, 220, 30], [1030, 350, 190, 100, 11],
  [690, 90, 200, 160, 9], [850, 0, 130, 70, 12], [820, 330, 60, 110, 8], [800, 1000, 170, 110, 8]
]);
scatter(440, 1060, 1.5077, 1.8233, [
  [575, 380, 240, 80, 12], [785, 340, 90, 30, 6], [845, 390, 80, 50, 7], [853, 478, 22, 38, 11]
]);
'651,128,4;568,152,1;464,287,4;893,234,2;941,292,2;869,405,2;853,426,1;804,415,1;828,413,2;1195,542,3;1161,592,1;1113,715,1;1025,798,6;1005,763,5;1118,858,5;1185,858,4;1359,910,3;849,671,2;830,657,3;925,655,3;978,697,2;533,765,6;1274,930,3;1271,958,4;1066,1018,4;1253,1023,4;1230,1101,4;1382,1093,1;1392,1134,1;1416,1137,1;1373,1177,1;1400,1181,1;1442,1455,6;1467,1480,4;1153,1239,1;1087,1366,3;1030,1308,2;1032,1240,2;760,1252,5;1274,785,2;1303,905,2;1326,882,2'.split(';').forEach(function (s) {
  var a = s.split(',');
  circle(listings, 440 + a[0] / 1.5077, 360 + a[1] / 2.0103, 3, palette[a[2]]);
});
'404,373,6;363,401,1;424,412,2;414,430,4;403,439,1;426,450,2;384,462,2;442,479,2;283,528,2;292,523,0;284,545,2;195,542,2;145,599,2;290,616,2;473,616,0;521,604,2;537,605,5;424,734,0;382,932,1;281,987,1;219,1166,2;754,583,2;770,518,2;850,244,4;678,274,4;786,418,3;883,210,5;941,289,3;1199,317,4;1215,332,2;1180,385,4;1159,413,3;1412,87,1;1428,90,1;1435,110,1;1350,150,1;1341,188,2;1285,243,1;1320,149,3;1278,218,3;1293,226,2;1325,170,3;1320,185,2;1356,154,1;1293,206,1'.split(';').forEach(function (s) {
  var a = s.split(',');
  circle(listings, 440 + a[0] / 1.5077, 1060 + a[1] / 1.8233, 3, palette[a[2]]);
});
```
